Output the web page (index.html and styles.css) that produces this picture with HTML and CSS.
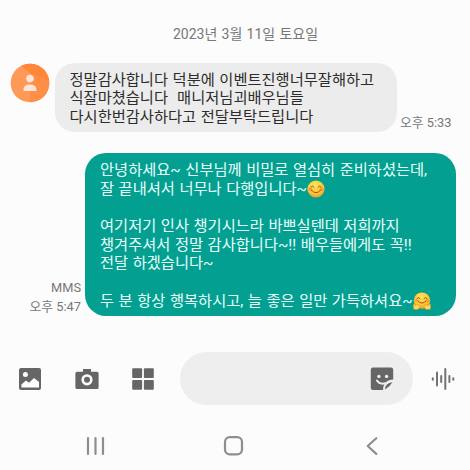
FILE: index.html
```html
<!DOCTYPE html>
<html lang="ko">
<head>
<meta charset="utf-8">
<title>메시지</title>
<link rel="stylesheet" href="styles.css">
</head>
<body>
<main class="screen">
  <div class="date">2023년 3월 11일 토요일</div>
  <section class="row received">
    <svg class="avatar" viewBox="0 0 40 40">
      <defs><clipPath id="disc"><circle cx="20" cy="20" r="19.3"/></clipPath></defs>
      <g clip-path="url(#disc)">
        <path fill="#ff9958" d="M0 0h40v40H0z"/>
        <path fill="#ff8639" d="M8 0h32v19L20 10z"/>
        <path fill="#ff8e48" d="M20 10l20 9v21H20z"/>
      </g>
      <circle cx="20" cy="15.6" r="3.8" fill="#ffe5d5"/>
      <path fill="#ffe5d5" d="M13.6 28v-1.4c0-3.2 2.6-5 6.4-5s6.4 1.8 6.4 5V28z"/>
    </svg>
    <div class="bubble">
      <p>정말감사합니다 덕분에 이벤트진행너무잘해하고</p>
      <p>식잘마쳤습니다&nbsp; 매니저님괴배우님들</p>
      <p>다시한번감사하다고 전달부탁드립니다</p>
    </div>
    <div class="meta">오후 5:33</div>
  </section>
  <section class="row sent">
    <div class="meta">MMS<br>오후 5:47</div>
    <div class="bubble">
      <p>안녕하세요~ 신부님께 비밀로 열심히 준비하셨는데,</p>
      <p>잘 끝내셔서 너무나 다행입니다~<svg class="emoji" viewBox="0 0 18 18">
        <defs><radialGradient id="face" cx=".45" cy=".3" r=".75"><stop offset="0" stop-color="#ffe45c"/><stop offset=".65" stop-color="#fbc435"/><stop offset="1" stop-color="#e79523"/></radialGradient></defs>
        <circle cx="9" cy="9" r="8.6" fill="url(#face)"/>
        <ellipse cx="3.5" cy="9.3" rx="2.1" ry="1.6" fill="#f58a32" opacity=".7"/><ellipse cx="14.5" cy="9.3" rx="2.1" ry="1.6" fill="#f58a32" opacity=".7"/>
        <path class="features" d="M3.7 7.2q1.7-2.6 3.4 0M10.9 7.2q1.7-2.6 3.4 0M4.3 10.2q4.7 5.2 9.4 0"/>
      </svg></p>
      <p>&nbsp;</p>
      <p>여기저기 인사 챙기시느라 바쁘실텐데 저희까지</p>
      <p>챙겨주셔서 정말 감사합니다~!! 배우들에게도 꼭!!</p>
      <p>전달 하겠습니다~</p>
      <p>&nbsp;</p>
      <p>두 분 항상 행복하시고, 늘 좋은 일만 가득하셔요~<svg class="emoji" viewBox="0 0 18 18">
        <circle cx="9" cy="8.6" r="8.2" fill="url(#face)"/>
        <ellipse cx="3.7" cy="8.6" rx="2" ry="1.5" fill="#f58a32" opacity=".7"/><ellipse cx="14.3" cy="8.6" rx="2" ry="1.5" fill="#f58a32" opacity=".7"/>
        <path class="features" d="M4 6.6q1.6-2.4 3.2 0M10.8 6.6q1.6-2.4 3.2 0M5.4 9.3q3.6 3.8 7.2 0"/>
        <path fill="#ffd65a" stroke="#dc8b24" stroke-width=".5" d="M.8 17.3Q-.2 14.1 1 11.9q.8-.8 1.1.9l.4.9 2-1.4q1.1-.1.5 1l1.3-.4q.9.4.1 1.2.8.3.2 1.1-.6 2.1-2.6 2.4zM17.2 17.3q1-3.2-.2-5.4-.8-.8-1.1.9l-.4.9-2-1.4q-1.1-.1-.5 1l-1.3-.4q-.9.4-.1 1.2-.8.3-.2 1.1.6 2.1 2.6 2.4z"/>
      </svg></p>
    </div>
  </section>
  <section class="composer">
    <svg class="icon" viewBox="0 0 24 24">
      <path fill-rule="evenodd" d="M3 1h18a2 2 0 0 1 2 2v18a2 2 0 0 1-2 2H3a2 2 0 0 1-2-2V3a2 2 0 0 1 2-2zm4.4 4a2.5 2.5 0 1 0 0 5 2.5 2.5 0 0 0 0-5zM3.4 20.5H21V15L16 11l-5 4.7-3-2.2-4.6 4z"/>
    </svg>
    <svg class="icon camera" viewBox="0 0 24 24">
      <path d="M8 2h8v2.7h6a1.6 1.6 0 0 1 1.6 1.6v14.1a1.6 1.6 0 0 1-1.6 1.6H2a1.6 1.6 0 0 1-1.6-1.6V6.3A1.6 1.6 0 0 1 2 4.7h6z"/>
      <circle class="lens" cx="12" cy="12.8" r="4.3"/>
    </svg>
    <svg class="icon" viewBox="0 0 24 24">
      <rect x="1.2" y="1.2" width="9.9" height="9.9" rx="1"/><rect x="12.9" y="1.2" width="9.9" height="9.9" rx="1"/>
      <rect x="1.2" y="12.9" width="9.9" height="9.9" rx="1"/><rect x="12.9" y="12.9" width="9.9" height="9.9" rx="1"/>
    </svg>
    <div class="field">
      <svg class="icon" viewBox="0 0 24 24">
        <path d="M3 .6h18a2.2 2.2 0 0 1 2.2 2.2v9.7c-6 .5-9.9 3-10.2 10.5H3A2.2 2.2 0 0 1 .8 20.8V2.8A2.2 2.2 0 0 1 3 .6z"/>
        <path d="M15 22.5q.3-6.5 7.4-7.2-2.3 4.2-7.4 7.2z"/>
        <circle cx="8.9" cy="9.4" r="1.7" fill="#eee"/><circle cx="16.6" cy="9.4" r="1.7" fill="#eee"/>
        <path d="M6.9 13.6q2.8 4.4 8.6 2.6" fill="none" stroke="#eee" stroke-width="1.9" stroke-linecap="round"/>
      </svg>
    </div>
    <svg class="icon wave" viewBox="0 0 24 24">
      <path d="M1.8 11.2v1.6M6 5.5v13M10.2 9v6M14.3 2v20M18.4 9v6M22.3 11.2v1.6"/>
    </svg>
  </section>
  <nav class="navbar">
    <svg viewBox="0 0 24 24"><path d="M4 4v16M11.5 4v16M19 4v16"/></svg>
    <svg viewBox="0 0 24 24"><rect x="3" y="3.2" width="17" height="17.2" rx="4.8"/></svg>
    <svg viewBox="0 0 24 24"><path d="M16.3 4.2L7.7 12l8.6 7.9"/></svg>
  </nav>
</main>
</body>
</html>
```
FILE: styles.css
```css
* { box-sizing: border-box; }
body { margin: 0; background: #fcfcfc; }
p { margin: 0; }
.screen {
  width: 470px;
  height: 470px;
  overflow: hidden;
  font-family: Roboto, "Noto Sans CJK KR", sans-serif;
  white-space: nowrap;
}
.date {
  height: 63px;
  padding-top: 24px;
  padding-left: 21px;
  text-align: center;
  font-size: 14px;
  line-height: 20px;
  word-spacing: 0.8px;
  color: #777;
}
.row { display: flex; }
.received { height: 69px; padding-left: 10px; }
.avatar { width: 40px; height: 40px; flex: none; }
.bubble {
  flex: none;
  font-size: 15.3px;
  line-height: 18.67px;
  word-spacing: 0.75px;
}
.bubble p { height: 18.67px; }
.received .bubble {
  width: 342px;
  margin-left: 5px;
  padding: 7.6px 14.5px;
  border-radius: 20px;
  background: #ececec;
  color: #2c2c2c;
}
.meta { font-size: 12.8px; line-height: 19px; color: #777; }
.received .meta { align-self: flex-end; margin-left: 3px; }
.sent { height: 163px; margin-top: 21px; padding-right: 14px; justify-content: flex-end; }
.sent .meta { align-self: flex-end; margin-right: 4px; text-align: right; }
.sent .bubble {
  width: 371px;
  padding: 8px 15px;
  border-radius: 21px;
  background: #03a092;
  color: #e9fffb;
}
.emoji { width: 18px; height: 18px; vertical-align: -4px; }
.features { fill: none; stroke: #a65219; stroke-width: 1; stroke-linecap: round; }
.composer {
  display: flex;
  align-items: center;
  height: 53px;
  margin-top: 36px;
  padding-left: 18px;
}
.icon { width: 24px; height: 24px; flex: none; margin-right: 32.5px; fill: #666; }
.icon.camera { margin-right: 32px; }
.lens { fill: none; stroke: #fcfcfc; stroke-width: 2.6; }
.field {
  display: flex;
  align-items: center;
  justify-content: flex-end;
  width: 232.5px;
  height: 53px;
  margin-left: -7px;
  padding-right: 18.5px;
  border-radius: 27px;
  background: #eee;
}
.field .icon { margin: 0; }
.wave { margin: 0 0 0 18.5px; fill: none; stroke: #737373; stroke-width: 2; stroke-linecap: round; }
.navbar { display: flex; justify-content: space-between; padding: 29px 86px 0 84px; }
.navbar svg { width: 24px; height: 24px; fill: none; stroke: #8e8e8e; stroke-width: 2.2; stroke-linecap: round; stroke-linejoin: round; }
```
